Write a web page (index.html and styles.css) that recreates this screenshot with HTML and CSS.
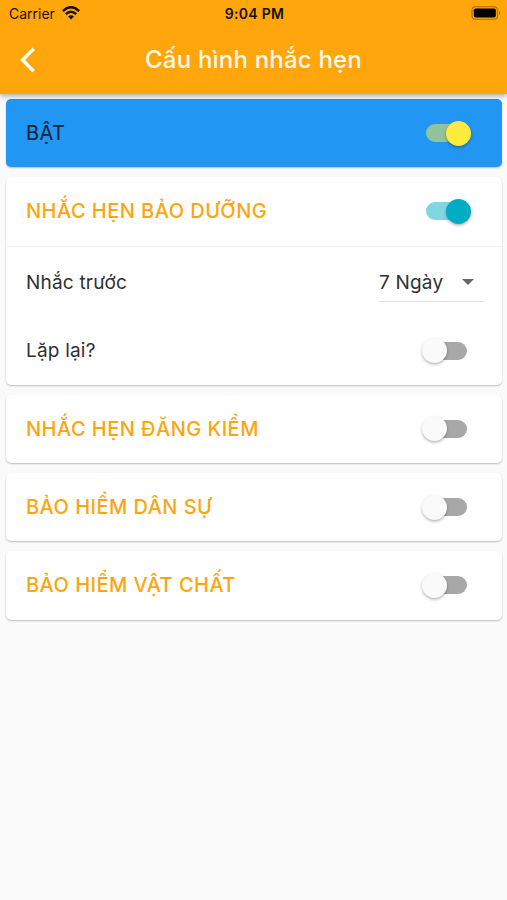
FILE: index.html
```html
<!DOCTYPE html>
<html lang="vi">
<head>
<meta charset="utf-8">
<title>Cấu hình nhắc hẹn</title>
<link rel="stylesheet" href="styles.css">
</head>
<body>
<header class="appbar">
  <div class="status">
    <div class="carrier">
      <span>Carrier</span>
      <svg class="wifi" width="18" height="14" viewBox="0 0 18 14" fill="none" stroke="#171006" stroke-width="2.5">
        <path d="M0.9 5.1Q9-2.7 17.1 5.1"/>
        <path d="M3.8 8.2Q9 3.4 14.2 8.2"/>
        <path d="M9 13.4L6 10.6Q9 8 12 10.6Z" fill="#171006" stroke="none"/>
      </svg>
    </div>
    <span class="time">9:04 PM</span>
    <svg class="battery" width="31" height="14" viewBox="0 0 31 14">
      <rect x="1" y="0.7" width="25.5" height="12.6" rx="3.5" fill="none" stroke="#a56c0c" stroke-width="1.1"/>
      <rect x="2.8" y="2.5" width="22" height="9" rx="1.8" fill="#000"/>
      <path d="M28 4.8Q30.5 7 28 9.2Z" fill="#a56c0c"/>
    </svg>
  </div>
  <div class="toolbar">
    <svg class="back" width="16" height="26" viewBox="0 0 16 26" fill="none" stroke="#fff" stroke-width="3.4">
      <path d="M13.6 1.8L2.6 13L13.6 24.2"/>
    </svg>
    <h1 class="title">Cấu hình nhắc hẹn</h1>
  </div>
</header>
<main class="list">
  <section class="card master">
    <div class="row"><span class="master-label">BẬT</span><span class="switch on yellow"></span></div>
  </section>
  <section class="card">
    <div class="row"><span class="heading">NHẮC HẸN BẢO DƯỠNG</span><span class="switch on teal"></span></div>
    <div class="details">
      <div class="row"><span class="label">Nhắc trước</span>
        <div class="select"><span>7 Ngày</span><i class="caret"></i></div>
      </div>
      <div class="row"><span class="label">Lặp lại?</span><span class="switch"></span></div>
    </div>
  </section>
  <section class="card">
    <div class="row"><span class="heading">NHẮC HẸN ĐĂNG KIỂM</span><span class="switch"></span></div>
  </section>
  <section class="card">
    <div class="row"><span class="heading">BẢO HIỂM DÂN SỰ</span><span class="switch"></span></div>
  </section>
  <section class="card">
    <div class="row"><span class="heading">BẢO HIỂM VẬT CHẤT</span><span class="switch"></span></div>
  </section>
</main>
</body>
</html>
```
FILE: styles.css
```css
* { box-sizing: border-box; }
body {
  margin: 0;
  min-height: 900px;
  background: #fafafa;
  color: #303030;
  font-family: Inter, "Liberation Sans", sans-serif;
}
.appbar {
  position: relative;
  z-index: 1;
  height: 94px;
  background: #ffa60d;
  box-shadow: 0 2px 5px rgba(0, 0, 0, .32);
}
.status {
  display: grid;
  grid-template-columns: 1fr auto 1fr;
  align-items: center;
  height: 26px;
  padding: 0 5px 0 9px;
  font-size: 14px;
  color: #171006;
}
.carrier { display: flex; align-items: center; gap: 7px; }
.time {
  margin-right: 2px;
  font-weight: 600;
  letter-spacing: .3px;
}
.battery { justify-self: end; }
.toolbar {
  display: grid;
  grid-template-columns: 60px 1fr 60px;
  align-items: center;
  height: 68px;
}
.back { margin-left: 20px; }
.title {
  margin: 0;
  text-align: center;
  color: #fff8e8;
  font-size: 24px;
  font-weight: 500;
  line-height: 30px;
  letter-spacing: .2px;
}
.list {
  display: grid;
  gap: 10px;
  padding: 5px 5px 0 6px;
}
.card {
  border-radius: 5px;
  background: #fff;
  box-shadow: 0 1px 2px rgba(0, 0, 0, .2), 0 1px 1px rgba(0, 0, 0, .06);
}
.row {
  display: flex;
  align-items: center;
  justify-content: space-between;
  height: 68.3px;
  padding: 0 20px;
}
.master { background: #2196f3; }
.master-label {
  font-size: 20px;
  letter-spacing: .4px;
  color: #0d2338;
}
.heading {
  font-size: 20px;
  font-weight: 500;
  letter-spacing: .47px;
  color: #fca510;
}
.label { font-size: 19px; letter-spacing: .2px; }
.details {
  margin-top: .5px;
  padding-top: 1px;
  border-top: 1px solid #f3f3f3;
}
.switch {
  position: relative;
  width: 41px;
  height: 18px;
  margin-right: 15px;
  border-radius: 9px;
  background: #a8a8a8;
}
.switch::before {
  content: "";
  position: absolute;
  top: -3.5px;
  left: -4px;
  width: 25px;
  height: 25px;
  border-radius: 50%;
  background: #fafafa;
  box-shadow: 0 1.5px 3px rgba(0, 0, 0, .3);
}
.switch.on::before { left: 19.5px; }
.yellow { background: #90c39a; }
.yellow::before { background: #ffeb3b; }
.teal { background: #80d6e1; }
.teal::before { background: #00acc1; }
.select {
  display: flex;
  align-items: center;
  justify-content: space-between;
  width: 104px;
  height: 39px;
  margin-right: -1px;
  padding: 1px 9px 0 0;
  border-bottom: 1px solid #dedede;
  font-size: 19px;
  letter-spacing: .2px;
}
.caret {
  border: 6px solid transparent;
  border-top-color: #666;
  border-bottom: 0;
}
```
